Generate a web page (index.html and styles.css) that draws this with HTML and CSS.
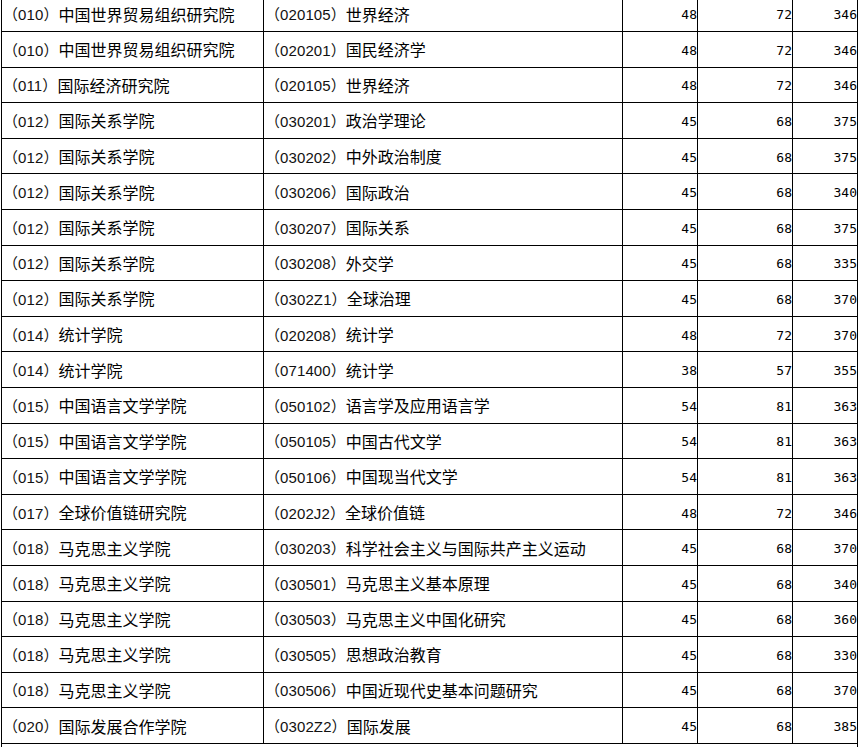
FILE: index.html
```html
<!DOCTYPE html>
<html lang="zh-CN">
<head>
<meta charset="utf-8">
<title>复试分数线</title>
<link rel="stylesheet" href="styles.css">
</head>
<body>
<div class="sheet">
  <div class="cell txt"><span class="code">（010）</span>中国世界贸易组织研究院</div><div class="cell txt"><span class="code">（020105）</span>世界经济</div><div class="cell num">48</div><div class="cell num">72</div><div class="cell num">346</div>
  <div class="cell txt"><span class="code">（010）</span>中国世界贸易组织研究院</div><div class="cell txt"><span class="code">（020201）</span>国民经济学</div><div class="cell num">48</div><div class="cell num">72</div><div class="cell num">346</div>
  <div class="cell txt"><span class="code">（011）</span>国际经济研究院</div><div class="cell txt"><span class="code">（020105）</span>世界经济</div><div class="cell num">48</div><div class="cell num">72</div><div class="cell num">346</div>
  <div class="cell txt"><span class="code">（012）</span>国际关系学院</div><div class="cell txt"><span class="code">（030201）</span>政治学理论</div><div class="cell num">45</div><div class="cell num">68</div><div class="cell num">375</div>
  <div class="cell txt"><span class="code">（012）</span>国际关系学院</div><div class="cell txt"><span class="code">（030202）</span>中外政治制度</div><div class="cell num">45</div><div class="cell num">68</div><div class="cell num">375</div>
  <div class="cell txt"><span class="code">（012）</span>国际关系学院</div><div class="cell txt"><span class="code">（030206）</span>国际政治</div><div class="cell num">45</div><div class="cell num">68</div><div class="cell num">340</div>
  <div class="cell txt"><span class="code">（012）</span>国际关系学院</div><div class="cell txt"><span class="code">（030207）</span>国际关系</div><div class="cell num">45</div><div class="cell num">68</div><div class="cell num">375</div>
  <div class="cell txt"><span class="code">（012）</span>国际关系学院</div><div class="cell txt"><span class="code">（030208）</span>外交学</div><div class="cell num">45</div><div class="cell num">68</div><div class="cell num">335</div>
  <div class="cell txt"><span class="code">（012）</span>国际关系学院</div><div class="cell txt"><span class="code">（0302Z1）</span>全球治理</div><div class="cell num">45</div><div class="cell num">68</div><div class="cell num">370</div>
  <div class="cell txt"><span class="code">（014）</span>统计学院</div><div class="cell txt"><span class="code">（020208）</span>统计学</div><div class="cell num">48</div><div class="cell num">72</div><div class="cell num">370</div>
  <div class="cell txt"><span class="code">（014）</span>统计学院</div><div class="cell txt"><span class="code">（071400）</span>统计学</div><div class="cell num">38</div><div class="cell num">57</div><div class="cell num">355</div>
  <div class="cell txt"><span class="code">（015）</span>中国语言文学学院</div><div class="cell txt"><span class="code">（050102）</span>语言学及应用语言学</div><div class="cell num">54</div><div class="cell num">81</div><div class="cell num">363</div>
  <div class="cell txt"><span class="code">（015）</span>中国语言文学学院</div><div class="cell txt"><span class="code">（050105）</span>中国古代文学</div><div class="cell num">54</div><div class="cell num">81</div><div class="cell num">363</div>
  <div class="cell txt"><span class="code">（015）</span>中国语言文学学院</div><div class="cell txt"><span class="code">（050106）</span>中国现当代文学</div><div class="cell num">54</div><div class="cell num">81</div><div class="cell num">363</div>
  <div class="cell txt"><span class="code">（017）</span>全球价值链研究院</div><div class="cell txt"><span class="code">（0202J2）</span>全球价值链</div><div class="cell num">48</div><div class="cell num">72</div><div class="cell num">346</div>
  <div class="cell txt"><span class="code">（018）</span>马克思主义学院</div><div class="cell txt"><span class="code">（030203）</span>科学社会主义与国际共产主义运动</div><div class="cell num">45</div><div class="cell num">68</div><div class="cell num">370</div>
  <div class="cell txt"><span class="code">（018）</span>马克思主义学院</div><div class="cell txt"><span class="code">（030501）</span>马克思主义基本原理</div><div class="cell num">45</div><div class="cell num">68</div><div class="cell num">340</div>
  <div class="cell txt"><span class="code">（018）</span>马克思主义学院</div><div class="cell txt"><span class="code">（030503）</span>马克思主义中国化研究</div><div class="cell num">45</div><div class="cell num">68</div><div class="cell num">360</div>
  <div class="cell txt"><span class="code">（018）</span>马克思主义学院</div><div class="cell txt"><span class="code">（030505）</span>思想政治教育</div><div class="cell num">45</div><div class="cell num">68</div><div class="cell num">330</div>
  <div class="cell txt"><span class="code">（018）</span>马克思主义学院</div><div class="cell txt"><span class="code">（030506）</span>中国近现代史基本问题研究</div><div class="cell num">45</div><div class="cell num">68</div><div class="cell num">370</div>
  <div class="cell txt"><span class="code">（020）</span>国际发展合作学院</div><div class="cell txt"><span class="code">（0302Z2）</span>国际发展</div><div class="cell num">45</div><div class="cell num">68</div><div class="cell num">385</div>
  <div class="cell wide"></div>
</div>
</body>
</html>
```
FILE: styles.css
```css
html, body {
  margin: 0;
  padding: 0;
  background: #fff;
}

body {
  overflow: hidden;
}

.sheet {
  display: grid;
  grid-template-columns: 261px 358px 74px 94px 64px;
  grid-auto-rows: 34.6px;
  gap: 1px;
  padding: 1px;
  background: #000;
  width: max-content;
  margin: -4.6px 0 0 1px;
  color: #000;
}

.cell {
  background: #fff;
  display: flex;
  align-items: center;
  overflow: hidden;
  white-space: nowrap;
}

.txt {
  font-family: "Noto Sans CJK SC", sans-serif;
  font-size: 16px;
  letter-spacing: 0;
  padding-left: 1px;
}

.code {
  font-family: "Liberation Sans", "Noto Sans CJK SC", sans-serif;
  font-size: 15px;
  letter-spacing: 0.1px;
  color: #111;
}

.num {
  font-family: "DejaVu Sans Mono", monospace;
  font-size: 13px;
  justify-content: flex-end;
  padding-top: 2px;
  box-sizing: border-box;
  color: #000;
}

.wide {
  grid-column: 1 / -1;
}
```
